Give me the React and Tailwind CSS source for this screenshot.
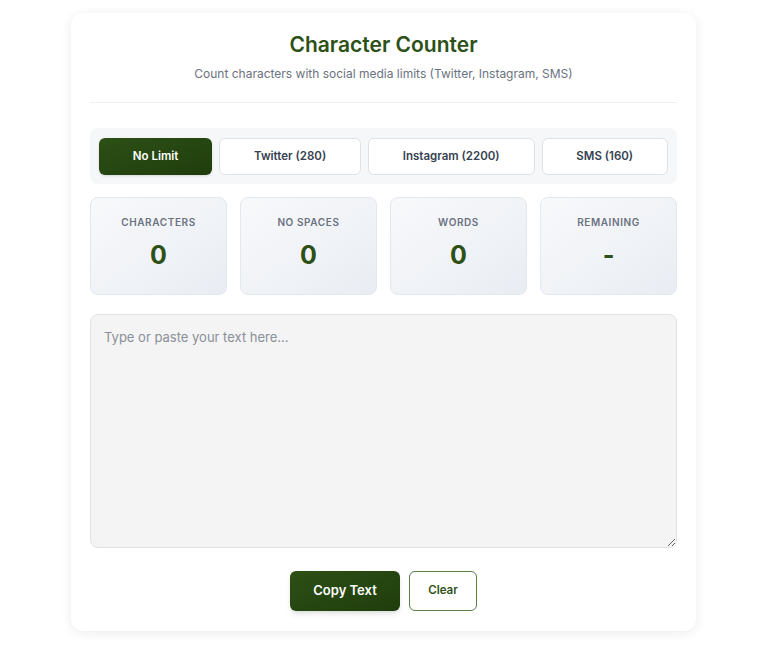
import React, { useState } from 'react'

const modes = [
  { id: 'none', label: 'No Limit', limit: null },
  { id: 'twitter', label: 'Twitter (280)', limit: 280 },
  { id: 'instagram', label: 'Instagram (2200)', limit: 2200 },
  { id: 'sms', label: 'SMS (160)', limit: 160 },
]

const StatCard = ({ label, value }) => {
  return (
    <div className="h-[98px] rounded-lg border border-[#e3e7ee] bg-gradient-to-br from-[#f8f9fb] to-[#e9edf3] flex flex-col items-center pt-[17px]">
      <div className="text-[10px] font-semibold tracking-[0.06em] uppercase text-[#6b7280] leading-[14px]">{label}</div>
      <div className="mt-[10px] text-[25px] font-bold leading-[32px] text-[#2d5016]">{value}</div>
    </div>
  )
}

const App = () => {
  const [mode, setMode] = useState('none')
  const [text, setText] = useState('')

  const current = modes.find((m) => m.id === mode)
  const chars = text.length
  const noSpaces = text.replace(/\s/g, '').length
  const words = text.trim() ? text.trim().split(/\s+/).length : 0
  const remaining = current.limit ? current.limit - chars : '-'

  return (
    <div className="min-h-screen bg-white pt-[13px] font-['Inter','Liberation_Sans',sans-serif]">
      <div className="ml-[71px] w-[625px] rounded-xl bg-white shadow-[0_2px_12px_rgba(0,0,0,0.08)] px-[19px] pt-[18px] pb-[20px]">
        {/* header */}
        <div className="border-b border-[#eef0f2] pb-[18px] text-center">
          <h1 className="text-[21px] leading-[28px] font-semibold text-[#2d5016]">Character Counter</h1>
          <p className="mt-[5px] text-[12px] leading-[20px] text-[#6b7280]">
            Count characters with social media limits (Twitter, Instagram, SMS)
          </p>
        </div>

        {/* mode tabs */}
        <div className="mt-[25px] flex gap-[7px] rounded-lg bg-[#f6f7f9] px-[9px] pt-[10px] pb-[9px]">
          {modes.map((m) => (
            <button
              key={m.id}
              onClick={() => setMode(m.id)}
              className={
                m.id === mode
                  ? 'flex-auto h-[37px] px-4 rounded-md bg-gradient-to-br from-[#2d5016] to-[#1f3d0c] text-white text-[11.5px] font-semibold shadow-sm'
                  : 'flex-auto h-[37px] px-4 rounded-md bg-white border border-[#dde2ea] text-[#374151] text-[11.5px] font-semibold'
              }
            >
              {m.label}
            </button>
          ))}
        </div>

        {/* stats */}
        <div className="mt-[13px] grid grid-cols-4 gap-[13px]">
          <StatCard label="Characters" value={chars} />
          <StatCard label="No Spaces" value={noSpaces} />
          <StatCard label="Words" value={words} />
          <StatCard label="Remaining" value={remaining} />
        </div>

        {/* text input */}
        <textarea
          value={text}
          onChange={(e) => setText(e.target.value)}
          placeholder="Type or paste your text here..."
          className="mt-[19px] block w-full h-[234px] rounded-lg border border-[#dfe3e8] bg-[#f4f4f4] px-[13px] py-[12px] text-[13px] leading-[20px] text-[#374151] placeholder:text-[#8a8f98] outline-none"
        />

        {/* actions */}
        <div className="mt-[23px] flex justify-center gap-[9px]">
          <button className="w-[110px] h-[40px] rounded-md bg-gradient-to-br from-[#2d5016] to-[#1f3d0c] text-white text-[13px] font-semibold shadow-md">
            Copy Text
          </button>
          <button
            onClick={() => setText('')}
            className="w-[68px] h-[40px] rounded-md border-[1.5px] border-[#5a7d47] bg-white text-[#2d5016] text-[11.5px] font-semibold"
          >
            Clear
          </button>
        </div>
      </div>
    </div>
  )
}

export default App
